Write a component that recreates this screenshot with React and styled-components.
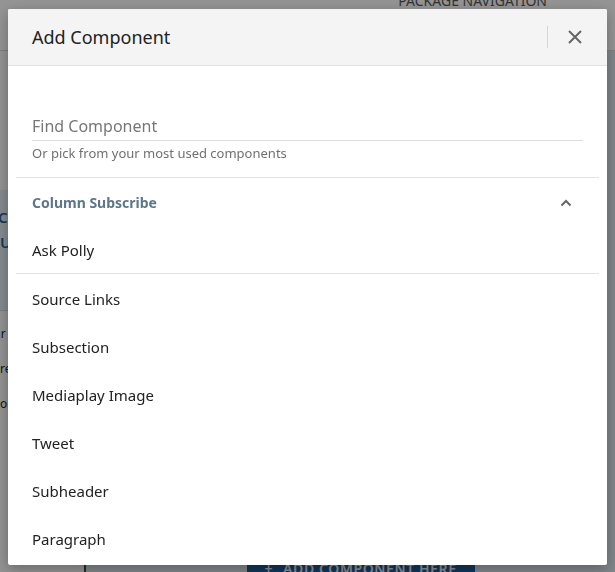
import React from 'react'
import styled, { createGlobalStyle } from 'styled-components'

const GlobalStyle = createGlobalStyle`
  html, body {
    margin: 0;
    padding: 0;
    height: 100%;
    overflow: hidden;
    font-family: 'Noto Sans', 'Open Sans', sans-serif;
  }
`;

/* page behind the dialog */

const Page = styled.div`
  width: 615px;
  height: 572px;
  display: flex;
  flex-direction: column;
  background: #f2f2f2;
`;

const TopBar = styled.div`
  height: 50px;
  flex-shrink: 0;
  background: #f7f7f7;
  border-bottom: 1px solid #d4d4d4;
  display: flex;
  justify-content: flex-end;
  padding-right: 68px;
`;

const NavLabel = styled.div`
  margin-top: -9px;
  font-size: 14px;
  color: #555;
  text-transform: uppercase;
`;

const Workspace = styled.div`
  flex: 1;
  display: flex;
`;

const Sidebar = styled.div`
  width: 84px;
  border-right: 2px solid #37474f;
  background: #f4f4f4;
  display: flex;
  flex-direction: column;
  padding-top: 139px;
`;

const SideBanner = styled.div`
  height: 105px;
  background: #dde6ee;
  border-bottom: 1px solid #d0d0d0;
  color: #2a5d8f;
  font-size: 15px;
  font-weight: 600;
  line-height: 25px;
  padding: 15px 0 0 0;
  text-indent: -2px;
`;

const SideText = styled.div`
  font-size: 12px;
  color: #222;
  line-height: 35px;
  padding-top: 5px;
  text-indent: -6px;
`;

const Main = styled.div`
  flex: 1;
  display: flex;
  flex-direction: column;
  align-items: center;
  justify-content: flex-end;
  background: #d6dfe6;
  padding-top: 60px;
`;

const AddHere = styled.div`
  width: 228px;
  height: 30px;
  margin-left: 20px;
  margin-bottom: -18px;
  background: #1d5a94;
  color: #e8eef4;
  font-size: 14px;
  font-weight: 600;
  letter-spacing: 0.6px;
  display: flex;
  align-items: flex-start;
  justify-content: center;
  gap: 10px;
  line-height: 18px;
`;

/* dialog */

const Overlay = styled.div`
  position: fixed;
  inset: 0;
  background: rgba(0, 0, 0, 0.4);
  display: flex;
  justify-content: center;
  align-items: flex-start;
  padding-top: 9px;
`;

const Dialog = styled.div`
  width: 599px;
  height: 556px;
  background: #fff;
  border-radius: 2px;
  box-shadow: 0 4px 14px rgba(0, 0, 0, 0.3);
  display: flex;
  flex-direction: column;
  overflow: hidden;
`;

const Header = styled.div`
  height: 56px;
  flex-shrink: 0;
  background: #f4f4f4;
  border-bottom: 1px solid #e2e2e2;
  display: flex;
  align-items: center;
  padding: 0 5px 0 24px;
`;

const Title = styled.h2`
  flex: 1;
  margin: 0;
  font-size: 18px;
  font-weight: 400;
  color: #222;
`;

const HeaderDivider = styled.div`
  width: 1px;
  height: 22px;
  background: #d6d6d6;
`;

const CloseButton = styled.button`
  width: 54px;
  height: 56px;
  border: 0;
  background: none;
  padding: 0;
  display: flex;
  align-items: center;
  justify-content: center;
  cursor: pointer;
`;

const SearchArea = styled.div`
  padding: 48px 24px 15px;
  display: flex;
  flex-direction: column;
  gap: 3px;
`;

const SearchInput = styled.input`
  border: 0;
  border-bottom: 1px solid #dcdcdc;
  outline: none;
  padding: 0 0 2px;
  font-family: inherit;
  font-size: 16px;
  line-height: 24px;
  color: #222;
  background: none;

  &::placeholder {
    color: #777;
  }
`;

const Hint = styled.div`
  font-size: 13px;
  line-height: 18px;
  color: #707070;
`;

const List = styled.div`
  margin: 0 8px;
  border-top: 1px solid #e2e2e2;
  display: flex;
  flex-direction: column;
`;

const Row = styled.div`
  height: 48px;
  flex-shrink: 0;
  display: flex;
  align-items: center;
  justify-content: space-between;
  padding: 1px 27px 0 16px;
  box-sizing: border-box;
  color: ${p => (p.$group ? '#5d7787' : '#222')};
  font-weight: ${p => (p.$group ? 700 : 400)};
  font-size: ${p => (p.$group ? '14px' : '15px')};
  border-bottom: ${p => (p.$divided ? '1px solid #e2e2e2' : '0')};
`;

const items = ['Source Links', 'Subsection', 'Mediaplay Image', 'Tweet', 'Subheader', 'Paragraph'];

const App = () => {
  return (
    <>
      <GlobalStyle />
      <Page>
        <TopBar>
          <NavLabel>Package Navigation</NavLabel>
        </TopBar>
        <Workspace>
          <Sidebar>
            <SideBanner>
              CU<br />UE
            </SideBanner>
            <SideText>
              ar<br />re<br />om
            </SideText>
          </Sidebar>
          <Main>
            <AddHere>
              <span>+</span>
              <span>ADD COMPONENT HERE</span>
            </AddHere>
          </Main>
        </Workspace>
      </Page>

      <Overlay>
        <Dialog>
          <Header>
            <Title>Add Component</Title>
            <HeaderDivider />
            <CloseButton aria-label="Close">
              <svg width="14" height="14" viewBox="0 0 14 14">
                <path d="M1 1 L13 13 M13 1 L1 13" stroke="#666" strokeWidth="2" fill="none" />
              </svg>
            </CloseButton>
          </Header>

          <SearchArea>
            <SearchInput placeholder="Find Component" />
            <Hint>Or pick from your most used components</Hint>
          </SearchArea>

          <List>
            <Row $group>
              <span>Column Subscribe</span>
              <svg width="12" height="8" viewBox="0 0 12 8">
                <path d="M1.5 6.5 L6 2 L10.5 6.5" stroke="#666" strokeWidth="2" fill="none" />
              </svg>
            </Row>
            <Row $divided>Ask Polly</Row>
            {items.map(name => (
              <Row key={name}>{name}</Row>
            ))}
          </List>
        </Dialog>
      </Overlay>
    </>
  )
}

export default App
